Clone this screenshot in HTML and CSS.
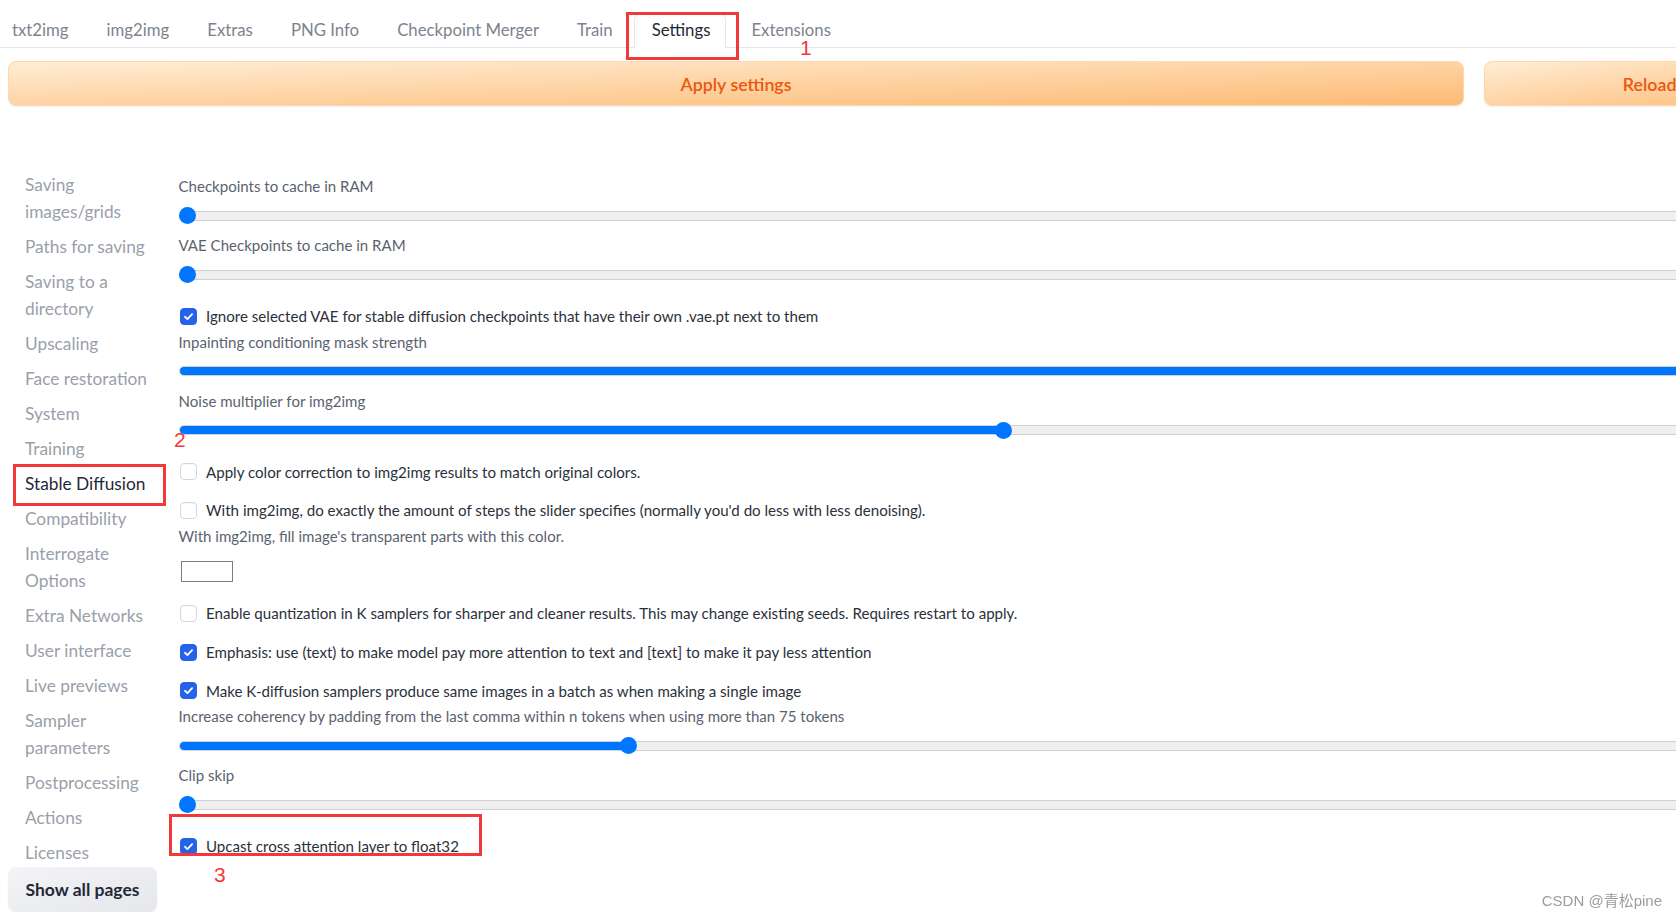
FILE: index.html
```html
<!DOCTYPE html>
<html lang="en">
<head>
<meta charset="utf-8">
<title>Settings</title>
<link rel="stylesheet" href="styles.css">
</head>
<body>
<div class="page">
  <nav class="tabs">
    <span class="tab">txt2img</span>
    <span class="tab">img2img</span>
    <span class="tab">Extras</span>
    <span class="tab">PNG Info</span>
    <span class="tab">Checkpoint Merger</span>
    <span class="tab">Train</span>
    <span class="tab active">Settings</span>
    <span class="tab">Extensions</span>
  </nav>

  <div class="actions">
    <button class="btn apply">Apply settings</button>
    <button class="btn reload">Reload UI</button>
  </div>

  <div class="settings">
    <aside class="sidebar">
      <div class="nav-item">Saving images/grids</div>
      <div class="nav-item">Paths for saving</div>
      <div class="nav-item">Saving to a directory</div>
      <div class="nav-item">Upscaling</div>
      <div class="nav-item">Face restoration</div>
      <div class="nav-item">System</div>
      <div class="nav-item">Training</div>
      <div class="nav-item selected">Stable Diffusion</div>
      <div class="nav-item">Compatibility</div>
      <div class="nav-item">Interrogate Options</div>
      <div class="nav-item">Extra Networks</div>
      <div class="nav-item">User interface</div>
      <div class="nav-item">Live previews</div>
      <div class="nav-item">Sampler parameters</div>
      <div class="nav-item">Postprocessing</div>
      <div class="nav-item">Actions</div>
      <div class="nav-item">Licenses</div>
      <button class="show-all">Show all pages</button>
    </aside>

    <main class="fields">
      <div class="field slider">
        <div class="lbl">Checkpoints to cache in RAM</div>
        <div class="range"><div class="rail"><div class="fill" style="width:7.5px"></div></div></div>
      </div>
      <div class="field slider">
        <div class="lbl">VAE Checkpoints to cache in RAM</div>
        <div class="range"><div class="rail"><div class="fill" style="width:7.5px"></div></div></div>
      </div>
      <label class="field check">
        <span class="box on"><svg viewBox="0 0 17 17" width="17" height="17"><path d="M4.5 8.8 L7.3 11.4 L12.6 5.8" fill="none" stroke="#fff" stroke-width="2" stroke-linecap="round" stroke-linejoin="round"/></svg></span>
        <span>Ignore selected VAE for stable diffusion checkpoints that have their own .vae.pt next to them</span>
      </label>
      <div class="field slider">
        <div class="lbl">Inpainting conditioning mask strength</div>
        <div class="range"><div class="rail"><div class="fill full" style="width:100%"></div></div></div>
      </div>
      <div class="field slider">
        <div class="lbl">Noise multiplier for img2img</div>
        <div class="range"><div class="rail"><div class="fill" style="width:823.5px"></div></div></div>
      </div>
      <label class="field check">
        <span class="box"></span>
        <span>Apply color correction to img2img results to match original colors.</span>
      </label>
      <label class="field check">
        <span class="box"></span>
        <span>With img2img, do exactly the amount of steps the slider specifies (normally you'd do less with less denoising).</span>
      </label>
      <div class="field colorf">
        <div class="lbl">With img2img, fill image's transparent parts with this color.</div>
        <div class="swatch"></div>
      </div>
      <label class="field check">
        <span class="box"></span>
        <span>Enable quantization in K samplers for sharper and cleaner results. This may change existing seeds. Requires restart to apply.</span>
      </label>
      <label class="field check">
        <span class="box on"><svg viewBox="0 0 17 17" width="17" height="17"><path d="M4.5 8.8 L7.3 11.4 L12.6 5.8" fill="none" stroke="#fff" stroke-width="2" stroke-linecap="round" stroke-linejoin="round"/></svg></span>
        <span>Emphasis: use (text) to make model pay more attention to text and [text] to make it pay less attention</span>
      </label>
      <label class="field check">
        <span class="box on"><svg viewBox="0 0 17 17" width="17" height="17"><path d="M4.5 8.8 L7.3 11.4 L12.6 5.8" fill="none" stroke="#fff" stroke-width="2" stroke-linecap="round" stroke-linejoin="round"/></svg></span>
        <span>Make K-diffusion samplers produce same images in a batch as when making a single image</span>
      </label>
      <div class="field slider">
        <div class="lbl">Increase coherency by padding from the last comma within n tokens when using more than 75 tokens</div>
        <div class="range"><div class="rail"><div class="fill" style="width:449px"></div></div></div>
      </div>
      <div class="field slider">
        <div class="lbl">Clip skip</div>
        <div class="range"><div class="rail"><div class="fill" style="width:7.5px"></div></div></div>
      </div>
      <label class="field check">
        <span class="box on"><svg viewBox="0 0 17 17" width="17" height="17"><path d="M4.5 8.8 L7.3 11.4 L12.6 5.8" fill="none" stroke="#fff" stroke-width="2" stroke-linecap="round" stroke-linejoin="round"/></svg></span>
        <span>Upcast cross attention layer to float32</span>
      </label>
    </main>
  </div>

  <div class="note-box nb-settings"></div>
  <div class="note-box nb-sd"></div>
  <div class="note-box nb-upcast"></div>
  <div class="note-num nn-1">1</div>
  <div class="note-num nn-2">2</div>
  <div class="note-num nn-3">3</div>
</div>
<div class="watermark">CSDN @青松pine</div>
</body>
</html>
```
FILE: styles.css
```css
html, body {
  margin: 0;
  padding: 0;
  overflow: hidden;
  background: #ffffff;
}

body {
  font-family: "Lato", "Noto Sans", sans-serif;
  color: #1f2937;
}

.page {
  position: relative;
  width: 1846px;
  padding: 0 8px;
  box-sizing: border-box;
}

/* ---------- tabs ---------- */
.tabs {
  display: flex;
  align-items: flex-end;
  gap: 4px;
  height: 48px;
  margin: 0 -8px;
  border-bottom: 1px solid #e5e7eb;
  box-sizing: border-box;
}

.tab {
  height: 34px;
  line-height: 34px;
  padding: 0 17px;
  font-size: 16.75px;
  color: #7d838e;
  white-space: nowrap;
}

.tab:first-child {
  padding-left: 12px;
}

.tab.active {
  color: #1f2937;
  background: #fff;
  border: 1px solid #e5e7eb;
  border-bottom-color: #fff;
  border-radius: 8px 8px 0 0;
  margin-bottom: -1px;
  margin-right: 4px;
  padding: 0 15px 0 17px;
}

/* ---------- action buttons ---------- */
.actions {
  display: flex;
  gap: 20px;
  margin-top: 13px;
}

.btn {
  height: 45px;
  border-radius: 8px;
  border: 1px solid #fed7aa;
  background: linear-gradient(to bottom right, #ffedd5, #fdba74);
  color: #ea580c;
  font-family: "Lato", "Noto Sans", sans-serif;
  font-weight: 600;
  font-size: 17.8px;
  box-shadow: 0 1px 2px rgba(0, 0, 0, 0.06);
  padding: 0;
}

.apply {
  flex: 1;
}

.reload {
  width: 354px;
  flex: none;
}

/* ---------- settings layout ---------- */
.settings {
  display: flex;
  margin-top: 60.5px;
}

.sidebar {
  width: 149px;
  flex: none;
}

.nav-item {
  padding: 4px 2px 4px 17px;
  line-height: 27px;
  font-size: 17.3px;
  color: #9aa0aa;
}

.nav-item.selected {
  color: #1f2937;
}

.show-all {
  display: block;
  width: 149px;
  height: 45px;
  margin-top: -3px;
  border: none;
  border-radius: 8px;
  background: linear-gradient(to bottom right, #f3f4f6, #e5e7eb);
  box-shadow: 0 1px 2px rgba(0, 0, 0, 0.05);
  font-family: "Lato", "Noto Sans", sans-serif;
  font-weight: 700;
  font-size: 17.5px;
  color: #1f2937;
  padding: 0;
}

.fields {
  flex: 1;
  margin-left: 21.5px;
  padding-top: 8.5px;
}

/* ---------- fields ---------- */
.field {
  display: block;
}

.field + .field {
  margin-top: 10px;
}

.slider + .check {
  margin-top: 23px;
}

.check + .check {
  margin-top: 18.75px;
}

.check + .slider,
.check + .colorf {
  margin-top: 4.5px;
}

.colorf + .check {
  margin-top: 21.5px;
}

.lbl {
  font-size: 15.05px;
  line-height: 22px;
  color: #5b626e;
  white-space: nowrap;
}

.range {
  display: flex;
  align-items: center;
  height: 17px;
  margin-top: 10px;
}

.rail {
  position: relative;
  flex: 1;
  height: 8px;
  border: 1px solid #d0d0d0;
  background: #efefef;
  border-radius: 5px;
}

.fill {
  position: relative;
  height: 100%;
  background: #0075ff;
  border-radius: 5px 0 0 5px;
}

.fill::after {
  content: "";
  position: absolute;
  right: -8.5px;
  top: 50%;
  width: 17px;
  height: 17px;
  margin-top: -8.5px;
  border-radius: 50%;
  background: #0075ff;
}

.fill.full {
  border-radius: 5px;
}

.check {
  display: flex;
  align-items: center;
  gap: 9px;
  height: 20px;
  padding-left: 1.5px;
  font-size: 15.1px;
  color: #2b313b;
  white-space: nowrap;
}

.box {
  width: 17px;
  height: 17px;
  flex: none;
  box-sizing: border-box;
  border: 1px solid #d4d7dc;
  border-radius: 4px;
  background: #fff;
  box-shadow: inset 0 1px 1px rgba(0, 0, 0, 0.03);
  display: flex;
  align-items: center;
  justify-content: center;
}

.box svg {
  display: block;
}

.box.on {
  background: #2563eb;
  border-color: #2563eb;
}

.swatch {
  width: 52px;
  height: 21px;
  margin-top: 14px;
  margin-left: 2.5px;
  box-sizing: border-box;
  border: 1px solid #7c7c7c;
  background: #fff;
}

/* ---------- annotations ---------- */
.note-box {
  position: absolute;
  box-sizing: border-box;
  border: 3px solid #f03a3a;
}

.nb-settings {
  left: 626px;
  top: 12px;
  width: 113px;
  height: 48px;
}

.nb-sd {
  left: 13px;
  top: 464px;
  width: 153px;
  height: 42px;
}

.nb-upcast {
  left: 169px;
  top: 814px;
  width: 313px;
  height: 42px;
}

.note-num {
  position: absolute;
  font-family: "Liberation Sans", "DejaVu Sans", sans-serif;
  font-size: 21px;
  line-height: 21px;
  color: #f03a3a;
}

.nn-1 {
  left: 800px;
  top: 37px;
}

.nn-2 {
  left: 174px;
  top: 429px;
}

.nn-3 {
  left: 214px;
  top: 864px;
}

.watermark {
  position: fixed;
  right: 14px;
  bottom: 7px;
  font-family: "Liberation Sans", "Noto Sans CJK SC", sans-serif;
  font-size: 15px;
  line-height: 20px;
  color: #9c9c9c;
}
```
